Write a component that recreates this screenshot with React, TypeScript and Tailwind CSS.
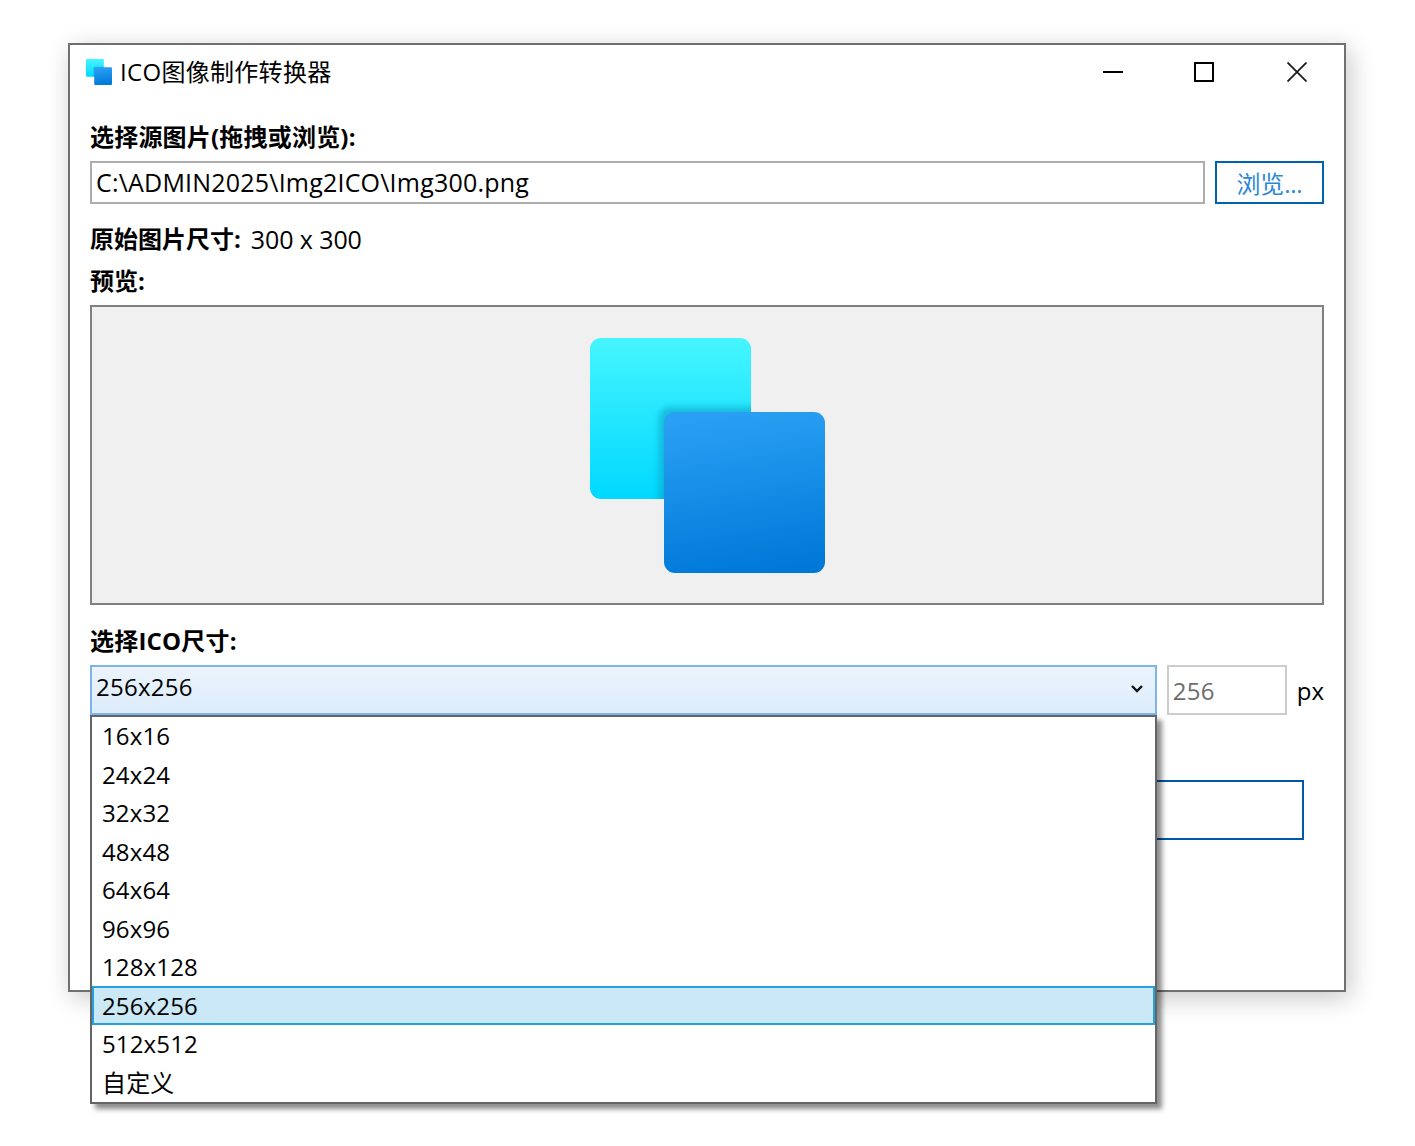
const sizes = ["16x16", "24x24", "32x32", "48x48", "64x64", "96x96", "128x128", "256x256", "512x512", "自定义"];

function AppIcon({ className }: { className: string }) {
  return (
    <svg viewBox="0 0 235 235" className={className}>
      <defs>
        <linearGradient id="cyan" x1="0" y1="0" x2="0" y2="1">
          <stop offset="0" stopColor="#46f5ff" />
          <stop offset="1" stopColor="#00d8ff" />
        </linearGradient>
        <linearGradient id="blue" x1="0.42" y1="0" x2="0.58" y2="1">
          <stop offset="0" stopColor="#2aa0f4" />
          <stop offset="1" stopColor="#0078d8" />
        </linearGradient>
        <filter id="soft" x="-20%" y="-20%" width="140%" height="140%">
          <feGaussianBlur stdDeviation="3" />
        </filter>
        <clipPath id="back">
          <rect x="0" y="0" width="161" height="161" rx="11" />
        </clipPath>
      </defs>
      <rect x="0" y="0" width="161" height="161" rx="11" fill="url(#cyan)" />
      <g clipPath="url(#back)">
        <rect x="69" y="69" width="120" height="120" rx="11" fill="#0f9fc4" opacity="0.6" filter="url(#soft)" />
      </g>
      <rect x="74" y="74" width="161" height="161" rx="11" fill="url(#blue)" />
    </svg>
  );
}

function WindowButtons() {
  return (
    <div className="flex items-center">
      <svg width="20" height="20" viewBox="0 0 20 20">
        <path d="M0 10H20" stroke="#000" strokeWidth="2" />
      </svg>
      <svg width="20" height="20" viewBox="0 0 20 20" className="ml-[71px]">
        <rect x="1" y="1" width="18" height="18" fill="none" stroke="#000" strokeWidth="2" />
      </svg>
      <svg width="20" height="20" viewBox="0 0 20 20" className="ml-[73px]">
        <path d="M0.5 0.5L19.5 19.5M19.5 0.5L0.5 19.5" stroke="#1a1a1a" strokeWidth="1.8" />
      </svg>
    </div>
  );
}

export default function App() {
  return (
    <div className="min-h-[1146px] bg-white pl-[68px] pt-[43px] text-[24px] text-black [font-family:'Open_Sans','Noto_Sans_CJK_SC',sans-serif]">
      <div className="flex h-[949px] w-[1278px] flex-col border-2 border-[#707070] bg-white shadow-[4px_6px_24px_rgba(0,0,0,0.22)]">
        <div className="flex h-[54px] shrink-0 items-center justify-between pl-4 pr-[37px]">
          <div className="flex items-center gap-2">
            <AppIcon className="h-[26px] w-[26px]" />
            <span className="leading-[30px] tracking-[0.3px]">ICO图像制作转换器</span>
          </div>
          <WindowButtons />
        </div>

        <div className="flex flex-col px-5 pt-5">
          <div className="h-9 font-bold leading-9 tracking-[0.2px]">选择源图片(拖拽或浏览):</div>
          <div className="mt-1.5 flex h-[43px] gap-2.5">
            <div className="flex flex-1 items-center border-2 border-[#adadad] pb-0.5 pl-1 text-[25px] leading-[32px] tracking-[0.2px]">
              C:\ADMIN2025\Img2ICO\Img300.png
            </div>
            <button className="w-[109px] border-2 border-[#0063b1] pt-0.5 text-center leading-[32px] tracking-[-0.2px] text-[#2b88d8]">
              浏览...
            </button>
          </div>

          <div className="mt-[19px] flex h-8 items-center leading-8">
            <span className="font-bold">原始图片尺寸:</span>
            <span className="ml-2.5 text-[25px] tracking-[-0.1px]">300 x 300</span>
          </div>
          <div className="mt-2.5 h-8 font-bold leading-8">预览:</div>
          <div className="mt-2 flex h-[300px] items-center justify-center border-2 border-[#808080] bg-[#f0f0f0]">
            <AppIcon className="h-[235px] w-[235px]" />
          </div>

          <div className="mt-5 h-8 font-bold leading-8 tracking-[0.2px]">选择ICO尺寸:</div>
          <div className="mt-2 flex h-[50px] items-stretch">
            <div className="relative w-[1067px]">
              <div className="flex h-full items-center justify-between border-2 border-[#7eb4ea] bg-gradient-to-b from-[#ecf4fc] to-[#dcecfc] pb-1.5 pl-1 pr-[11px] leading-8 tracking-[0.25px]">
                <span>256x256</span>
                <svg width="14" height="10" viewBox="0 0 14 10" className="mt-1">
                  <path d="M2 2L7 7L12 2" fill="none" stroke="#111" strokeWidth="2.4" />
                </svg>
              </div>
              <div className="absolute left-0 top-full z-10 h-[389px] w-full border-2 border-[#646464] bg-white shadow-[5px_5px_5px_rgba(0,0,0,0.45)]">
                <div className="-mt-[0.4px] tracking-[0.15px]">
                  {sizes.map((size) => (
                    <div
                      key={size}
                      className={
                        size === "256x256"
                          ? "flex h-[38.5px] items-center border-2 border-[#26a0da] bg-[#cbe8f6] pl-2 pt-[0.8px] leading-8"
                          : "flex h-[38.5px] items-center pl-2.5 pt-[0.8px] leading-8"
                      }
                    >
                      {size}
                    </div>
                  ))}
                </div>
              </div>
            </div>
            <div className="ml-2.5 flex w-[120px] items-center border-2 border-[#cccccc] pl-1 pt-0.5 leading-8 tracking-[0.2px] text-[#6d6d6d]">
              256
            </div>
            <div className="ml-2.5 flex items-center pt-0.5 leading-8">px</div>
          </div>

          <div className="ml-5 mr-5 mt-[65px] h-[60px] border-2 border-[#0058a8]" />
        </div>
      </div>
    </div>
  );
}
